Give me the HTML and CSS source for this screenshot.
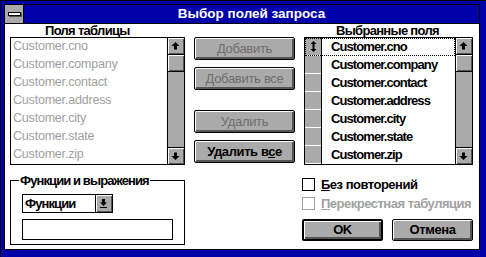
FILE: index.html
```html
<!DOCTYPE html>
<html lang="ru">
<head>
<meta charset="utf-8">
<title>Выбор полей запроса</title>
<link rel="stylesheet" href="styles.css">
</head>
<body>
<div class="window">
  <div class="frame">
    <div class="titlebar">
      <div class="sysmenu"><span class="sysbar"></span></div>
      <div class="title">Выбор полей запроса</div>
    </div>
    <div class="client">
      <div class="col col-left">
        <div class="caption caption-left">Поля таблицы</div>
        <div class="listbox">
          <ul class="items disabled-items">
            <li>Customer.cno</li>
            <li>Customer.company</li>
            <li>Customer.contact</li>
            <li>Customer.address</li>
            <li>Customer.city</li>
            <li>Customer.state</li>
            <li>Customer.zip</li>
          </ul>
          <div class="vscroll">
            <div class="sbtn"><svg width="16" height="16" viewBox="0 0 16 16"><polygon points="7.5,4 3.5,8 6,8 6,11.5 9,11.5 9,8 11.5,8" fill="#000"/></svg></div>
            <div class="thumb"></div>
            <div class="track"></div>
            <div class="sbtn sbtn-down"><svg width="16" height="16" viewBox="0 0 16 16"><polygon points="7.5,12 3.5,8 6,8 6,4.5 9,4.5 9,8 11.5,8" fill="#000"/></svg></div>
          </div>
        </div>
        <div class="group">
          <div class="group-label">Функции и выражения</div>
          <div class="combo">
            <span class="combo-text">Функции</span>
            <span class="combo-btn"><svg width="16" height="17" viewBox="0 0 16 17"><polygon points="7.5,11 4,7.5 6,7.5 6,4 9,4 9,7.5 11,7.5" fill="#000"/><rect x="4" y="12" width="7" height="1" fill="#000"/></svg></span>
          </div>
          <div class="textfield"></div>
        </div>
      </div>
      <div class="col col-mid">
        <button class="btn btn-off" disabled>Добавить</button>
        <button class="btn btn-off btn-gap1" disabled>Добавить все</button>
        <button class="btn btn-off btn-gap2" disabled>Удалить</button>
        <button class="btn btn-gap1">Удалить в<u>с</u>е</button>
      </div>
      <div class="col col-right">
        <div class="caption caption-right">Выбранные поля</div>
        <div class="listbox listbox-right">
          <ul class="items sel-items">
            <li class="focus"><span class="sel"><svg width="7" height="11" viewBox="0 0 7 11"><polygon points="3.5,0 0.5,3 2.5,3 2.5,8 0.5,8 3.5,11 6.5,8 4.5,8 4.5,3 6.5,3" fill="#000"/></svg></span><span class="txt">Customer.cno</span></li>
            <li><span class="sel"></span><span class="txt">Customer.company</span></li>
            <li><span class="sel"></span><span class="txt">Customer.contact</span></li>
            <li><span class="sel"></span><span class="txt">Customer.address</span></li>
            <li><span class="sel"></span><span class="txt">Customer.city</span></li>
            <li><span class="sel"></span><span class="txt">Customer.state</span></li>
            <li><span class="sel"></span><span class="txt">Customer.zip</span></li>
          </ul>
          <div class="vscroll">
            <div class="sbtn"><svg width="16" height="16" viewBox="0 0 16 16"><polygon points="7.5,4 3.5,8 6,8 6,11.5 9,11.5 9,8 11.5,8" fill="#000"/></svg></div>
            <div class="thumb"></div>
            <div class="track"></div>
            <div class="sbtn sbtn-down"><svg width="16" height="16" viewBox="0 0 16 16"><polygon points="7.5,12 3.5,8 6,8 6,4.5 9,4.5 9,8 11.5,8" fill="#000"/></svg></div>
          </div>
        </div>
        <div class="check check-first"><span class="box"></span><span class="check-label"><u>Б</u>ез повторений</span></div>
        <div class="check check-off"><span class="box"></span><span class="check-label"><u>П</u>ерекрестная табуляция</span></div>
        <div class="actions">
          <button class="btn btn-default">OK</button>
          <button class="btn btn-cancel">Отмена</button>
        </div>
      </div>
    </div>
  </div>
</div>
</body>
</html>
```

FILE: styles.css
```css
* { box-sizing: border-box; }
html, body { margin: 0; padding: 0; }
body {
  width: 486px;
  height: 257px;
  overflow: hidden;
  background: #0000aa;
  font-family: "Liberation Sans", Arial, sans-serif;
  font-size: 13px;
  font-weight: bold;
  letter-spacing: -0.9px;
  color: #000;
}
.window {
  width: 486px;
  height: 257px;
  background: #0000aa;
  border-top: 1px solid #000;
  border-left: 1px solid #000;
  padding: 3px 6px 7px 3px;
}
.frame {
  height: 100%;
  border: 1px solid #000;
  background: #fff;
  display: flex;
  flex-direction: column;
}
.titlebar {
  height: 19px;
  flex: none;
  display: flex;
  background: #0000aa;
  border-bottom: 1px solid #000;
}
.sysmenu {
  width: 19px;
  background: #aaaaaa;
  border-right: 1px solid #000;
  display: flex;
  align-items: center;
  justify-content: center;
}
.sysbar {
  width: 13px;
  height: 4px;
  background: #fff;
  border: 1px solid #000;
  box-shadow: 1px 1px 0 #555;
}
.title {
  flex: 1;
  color: #fff;
  text-align: center;
  font-size: 13.5px;
  letter-spacing: 0;
  line-height: 18px;
}
.client {
  flex: 1;
  display: flex;
  padding-left: 5px;
}
.col-left { width: 175px; }
.col-mid {
  width: 101px;
  margin-left: 9px;
  padding-top: 13px;
  display: flex;
  flex-direction: column;
}
.col-right { width: 171px; margin-left: 7px; }
.caption {
  height: 13px;
  line-height: 13px;
  white-space: nowrap;
  letter-spacing: -0.7px;
}
.caption-left { padding-left: 35px; }
.caption-right { padding-left: 34px; }
.listbox {
  height: 128px;
  border: 1px solid #000;
  display: flex;
  background: #fff;
}
.listbox-right { margin-left: 2px; }
.items {
  flex: 1;
  list-style: none;
  margin: 0;
  padding: 0;
  min-width: 0;
}
.items li {
  height: 18px;
  line-height: 17px;
  white-space: nowrap;
  overflow: hidden;
}
.disabled-items li {
  padding-left: 2px;
  color: #a0a0a0;
  font-weight: normal;
  font-size: 12.5px;
  letter-spacing: -0.2px;
}
.sel-items li { display: flex; }
.sel-items li.focus {
  outline: 1px dotted #000;
  outline-offset: -1px;
}
.sel {
  width: 17px;
  flex: none;
  border-right: 1px solid #000;
  background: linear-gradient(#aaaaaa 0 17px, #fff 17px);
  display: flex;
  align-items: center;
  justify-content: center;
  padding-bottom: 1px;
}
.sel svg { display: block; }
.txt { padding-left: 9px; }
.vscroll {
  width: 17px;
  flex: none;
  border-left: 1px solid #000;
  background: #aaaaaa;
  display: flex;
  flex-direction: column;
}
.sbtn, .thumb {
  height: 17px;
  flex: none;
  border-bottom: 1px solid #000;
  background: #aaaaaa;
  box-shadow: inset 1px 1px 0 #fff, inset -1px -1px 0 #555;
}
.sbtn svg { display: block; }
.track { flex: 1; }
.sbtn-down { border-bottom: 0; border-top: 1px solid #000; }
.group {
  margin-top: 15px;
  height: 65px;
  border: 1px solid #000;
  padding-left: 11px;
}
.group-label {
  display: table;
  margin: -7px 0 0 -3px;
  padding: 0 1px;
  background: #fff;
  height: 13px;
  line-height: 13px;
  white-space: nowrap;
}
.combo {
  margin-top: 7px;
  width: 91px;
  height: 19px;
  border: 1px solid #000;
  display: flex;
}
.combo-text {
  flex: 1;
  padding-left: 2px;
  line-height: 17px;
}
.combo-btn {
  width: 17px;
  border-left: 1px solid #000;
  background: #aaaaaa;
  box-shadow: inset 1px 1px 0 #fff, inset -1px -1px 0 #555;
}
.combo-btn svg { display: block; }
.textfield {
  margin-top: 6px;
  width: 151px;
  height: 21px;
  border: 1px solid #000;
}
.btn {
  width: 101px;
  height: 23px;
  padding: 0;
  margin: 0;
  border: 1px solid #000;
  border-radius: 2px;
  background: #aaaaaa;
  box-shadow: inset 1px 1px 0 #fff, inset -2px -2px 0 #555;
  font: inherit;
  letter-spacing: -0.4px;
  color: #000;
  text-align: center;
  line-height: 19px;
  white-space: nowrap;
}
.btn-off { color: #6e6e6e; font-weight: normal; letter-spacing: -0.3px; }
.btn-gap1 { margin-top: 7px; }
.btn-gap2 { margin-top: 20px; }
.check {
  display: flex;
  align-items: center;
  height: 13px;
  white-space: nowrap;
  letter-spacing: -0.5px;
}
.check-first { margin-top: 13px; }
.check-off { margin-top: 6px; color: #a0a0a0; }
.box {
  width: 13px;
  height: 13px;
  border: 1px solid #000;
  background: #fff;
  margin-right: 6px;
  flex: none;
}
.check-off .box { border-color: #a0a0a0; }
.check-label { line-height: 13px; }
.actions {
  margin-top: 9px;
  display: flex;
  gap: 9px;
}
.actions .btn { width: 81px; height: 22px; line-height: 18px; }
.btn-default { border-width: 2px; }
```
